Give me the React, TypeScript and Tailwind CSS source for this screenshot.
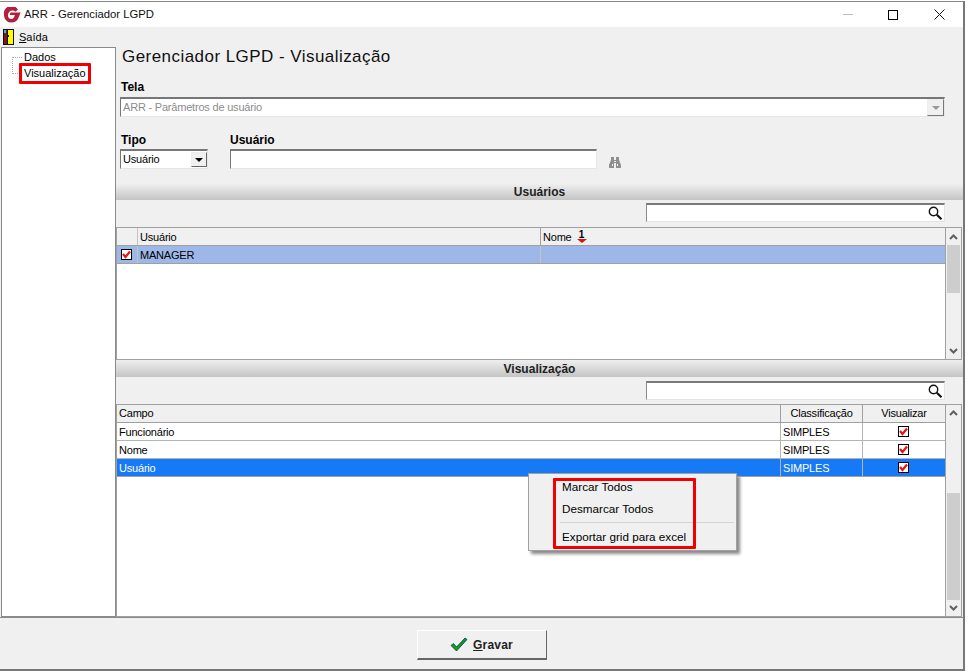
const font = { fontFamily: '"Liberation Sans", Arial, sans-serif' }

function RedCheck() {
  return (
    <span className="flex size-[11px] items-center justify-center border border-black bg-white">
      <svg width="9" height="9" viewBox="0 0 9 9">
        <path d="M1 4 L3.5 7 L8 1.5" fill="none" stroke="#ee1111" strokeWidth="2.2" />
      </svg>
    </span>
  )
}

function SearchIcon() {
  return (
    <svg width="16" height="16" viewBox="0 0 16 16" className="mr-px">
      <circle cx="6.5" cy="6.5" r="4.2" fill="none" stroke="#111" strokeWidth="1.4" />
      <path d="M9.8 9.8 L14.5 14.2" stroke="#111" strokeWidth="2.2" />
    </svg>
  )
}

function Binoculars() {
  return (
    <svg width="12" height="11" viewBox="0 0 12 11">
      <path d="M2 0h3v3h2V0h3v3l2 5v3H7V6H5v5H0V8l2-5z" fill="#8f8f8f" />
      <path d="M3 7h1v2H3zM8 7h1v2H8zM5 4h2v1H5z" fill="#f0f0f0" />
    </svg>
  )
}

function SectionBar({ title, height }: { title: string; height: string }) {
  return (
    <div className={`flex ${height} items-center justify-center bg-gradient-to-b from-[#efefef] to-[#c4c4c4] text-[12px] font-bold text-[#222]`}>
      {title}
    </div>
  )
}

function SearchBox({ top }: { top: string }) {
  return (
    <div className={`flex h-[27px] items-start justify-end ${top} pr-[18px]`}>
      <div className="flex h-[19px] w-[299px] items-center justify-end border-t-2 border-r border-b border-l border-t-[#7a7a7a] border-r-[#e4e4e4] border-b-[#e4e4e4] border-l-[#8a8a8a] bg-white">
        <SearchIcon />
      </div>
    </div>
  )
}

function Scrollbar({ thumbTop, thumbHeight }: { thumbTop: number; thumbHeight: number }) {
  return (
    <div className="flex w-[16px] flex-col border-l border-[#a0a0a0] bg-[#f0f0f0]">
      <div className="flex h-[17px] items-center justify-center">
        <svg width="9" height="6" viewBox="0 0 9 6">
          <path d="M1 5 L4.5 1.5 L8 5" fill="none" stroke="#606060" strokeWidth="2" />
        </svg>
      </div>
      <div className="flex-1 px-px">
        <div className="bg-[#cdcdcd]" style={{ marginTop: thumbTop, height: thumbHeight }} />
      </div>
      <div className="flex h-[17px] items-center justify-center">
        <svg width="9" height="6" viewBox="0 0 9 6">
          <path d="M1 1 L4.5 4.5 L8 1" fill="none" stroke="#606060" strokeWidth="2" />
        </svg>
      </div>
    </div>
  )
}

const fieldRows = ['Funcionário', 'Nome', 'Usuário']

export default function App() {
  return (
    <div className="relative h-[672px] w-[969px] overflow-hidden bg-white pt-px text-[11px] text-black" style={font}>
      {/* Window */}
      <div className="flex h-[670px] w-[965px] flex-col border-t border-r-2 border-b-2 border-t-[#888] border-r-[#777] border-b-[#777] bg-[#f0f0f0]">
        {/* Title bar */}
        <div className="flex h-[25px] items-center bg-white pl-[3px]">
          <svg width="18" height="16" viewBox="0 0 18 16">
            <path d="M15 2.6A7.6 7.6 0 0 0 1 8 7.4 7.4 0 0 0 8.6 15.6C12 15.6 14.6 13.6 15.6 10.4L17.6 5.6H7.6L6.6 8H11.8C11.2 10.6 10 12 8.4 12 6 12 4.8 10.2 5 8 5.2 5.6 7 3.6 9.4 3.6 10.6 3.6 11.6 4 12.4 4.8Z" fill="#b4203c" />
          </svg>
          <span className="ml-[3px] text-[11.3px] text-[#111]">ARR - Gerenciador LGPD</span>
          <div className="ml-auto flex items-center">
            <div className="mr-[35px] h-px w-[10px] bg-[#bbb]" />
            <div className="mr-[36px] size-[10px] border border-black" />
            <svg width="11" height="11" viewBox="0 0 11 11" className="mr-[18px]">
              <path d="M.5.5l10 10M10.5.5l-10 10" stroke="#111" strokeWidth="1" />
            </svg>
          </div>
        </div>

        {/* Menu */}
        <div className="flex h-[20px] items-center pl-[3px]">
          <svg width="11" height="16" viewBox="0 0 11 16">
            <rect width="11" height="16" fill="#111" />
            <rect x="1" y="1" width="3" height="14" fill="#7a1a10" />
            <rect x="1" y="1" width="2" height="3" fill="#30c0c8" />
            <rect x="5" y="1" width="5" height="14" fill="#ffff00" />
            <rect x="4" y="6" width="2" height="2" fill="#111" />
          </svg>
          <span className="ml-[5px]"><span className="underline">S</span>aída</span>
        </div>

        <div className="flex min-h-0 flex-1">
          {/* Tree */}
          <div className="relative ml-px w-[115px] border border-[#8a8a8a] bg-white">
            <div className="absolute top-[9px] left-[10px] h-[17px] w-[8px] border-b border-l border-dotted border-[#aaa]" />
            <div className="absolute top-[9px] left-[10px] w-[10px] border-t border-dotted border-[#aaa]" />
            <div className="pt-px pl-[22px] leading-[16px]">
              <div>Dados</div>
              <div>Visualização</div>
            </div>
          </div>

          {/* Content */}
          <div className="flex min-w-0 flex-1 flex-col">
            <div className="h-[137px] pl-[4px]">
              <h1 className="pl-[2px] text-[17px] leading-[20px] tracking-[0.45px] text-[#111]">Gerenciador LGPD - Visualização</h1>
              <div className="mt-[13px] pl-px text-[12px] leading-[14px] font-bold">Tela</div>
              <div className="mt-[3px] flex h-[20px] w-[825px] items-center justify-between border-t-2 border-r border-b border-l border-t-[#777] border-r-[#e6e6e6] border-b-[#e6e6e6] border-l-[#777] bg-white pl-[2px] tracking-[-0.2px] text-[#8c8c8c]">
                ARR - Parâmetros de usuário
                <span className="flex h-[17px] w-[17px] items-center justify-center border border-t-[#eee] border-r-[#777] border-b-[#777] border-l-[#eee] bg-[#f0f0f0]">
                  <span className="border-x-[4px] border-t-[4px] border-x-transparent border-t-[#999]" />
                </span>
              </div>
              <div className="mt-[16px] flex items-start text-[12px]">
                <div>
                  <div className="pl-px leading-[14px] font-bold">Tipo</div>
                  <div className="mt-[2px] flex h-[20px] w-[88px] items-center justify-between border-t-2 border-r border-b border-l border-t-[#777] border-r-[#e6e6e6] border-b-[#e6e6e6] border-l-[#777] bg-white pl-[2px] text-[11px] tracking-[-0.2px]">
                    Usuário
                    <span className="flex h-[15px] w-[16px] items-center justify-center border border-t-[#eee] border-r-[#666] border-b-[#666] border-l-[#eee] bg-[#f0f0f0]">
                      <span className="border-x-[4px] border-t-[4px] border-x-transparent border-t-black" />
                    </span>
                  </div>
                </div>
                <div className="ml-[22px]">
                  <div className="leading-[14px] font-bold">Usuário</div>
                  <div className="mt-[2px] h-[20px] w-[367px] border-t-2 border-r border-b border-l border-t-[#777] border-r-[#e6e6e6] border-b-[#e6e6e6] border-l-[#777] bg-white" />
                </div>
                <div className="mt-[24px] ml-[12px]"><Binoculars /></div>
              </div>
            </div>

            {/* Usuários */}
            <SectionBar title="Usuários" height="h-[16px]" />
            <SearchBox top="pt-[3px]" />
            <div className="flex h-[133px] w-[846px] border border-[#a0a0a0] bg-white tracking-[-0.2px]">
              <div className="min-w-0 flex-1">
                <div className="flex h-[18px] border-b border-[#a0a0a0] bg-[#f0f0f0] leading-[18px]">
                  <div className="w-[21px] border-r border-[#c4c4c4]" />
                  <div className="w-[403px] border-r border-[#a0a0a0] pl-[2px]">Usuário</div>
                  <div className="flex items-center pl-[2px]">
                    Nome
                    <span className="ml-[5px] flex w-[10px] flex-col items-center text-[10px] leading-[9px] font-bold">
                      1
                      <span className="border-x-[5px] border-t-[4px] border-x-transparent border-t-[#e01010]" />
                    </span>
                  </div>
                </div>
                <div className="flex h-[18px] border-b border-[#a0a0a0] bg-[#9db8e8] leading-[18px]">
                  <div className="flex w-[21px] items-center justify-center border-r border-[#c4c4c4] pr-px"><RedCheck /></div>
                  <div className="w-[403px] border-r border-[#c4c4c4] pl-[2px]">MANAGER</div>
                </div>
              </div>
              <Scrollbar thumbTop={0} thumbHeight={48} />
            </div>

            {/* Visualização */}
            <SectionBar title="Visualização" height="h-[17px]" />
            <SearchBox top="pt-[4px]" />
            <div className="flex h-[213px] w-[846px] border border-[#a0a0a0] bg-white tracking-[-0.2px]">
              <div className="min-w-0 flex-1">
                <div className="flex h-[18px] border-b border-[#a0a0a0] bg-[#f0f0f0] leading-[17px]">
                  <div className="w-[664px] border-r border-[#a0a0a0] pl-[2px]">Campo</div>
                  <div className="w-[82px] border-r border-[#a0a0a0] text-center">Classificação</div>
                  <div className="flex-1 text-center">Visualizar</div>
                </div>
                {fieldRows.map((name, i) => {
                  const selected = i === fieldRows.length - 1
                  return (
                    <div
                      key={name}
                      className={selected ? 'flex h-[18px] border-b border-[#a0a0a0] bg-[#1679f5] leading-[18px] text-white' : 'flex h-[18px] border-b border-[#b4b4b4] leading-[18px]'}
                    >
                      <div className="w-[664px] border-r border-[#b4b4b4] pl-[2px]">{name}</div>
                      <div className="w-[82px] border-r border-[#b4b4b4] pl-[2px]">SIMPLES</div>
                      <div className="flex flex-1 items-center justify-center pr-px"><RedCheck /></div>
                    </div>
                  )
                })}
              </div>
              <Scrollbar thumbTop={71} thumbHeight={107} />
            </div>
          </div>
        </div>

        {/* Footer */}
        <div className="flex h-[52px] items-start justify-center border-t border-[#8a8a8a] pt-[12px]">
          <button className="flex h-[30px] w-[130px] items-center justify-center gap-[5px] border border-t-white border-r-[#666] border-b-2 border-b-[#666] border-l-white bg-[#f0f0f0] text-[12px] font-bold tracking-[0.2px] text-[#222]">
            <svg width="18" height="15" viewBox="0 0 18 15">
              <path d="M1 8.5 L3.5 6.5 L6.5 10 L15 1 L17 2.5 L6.5 14 Z" fill="#0aa30a" stroke="#123080" strokeWidth="0.8" />
            </svg>
            <span><span className="underline">G</span>ravar</span>
          </button>
        </div>
      </div>

      {/* Annotation over the tree */}
      <div className="absolute top-[63px] left-[19px] h-[21px] w-[72px] rounded-[1px] border-[3px] border-[#f00000]" />

      {/* Context menu */}
      <div className="absolute top-[473px] left-[528px] h-[78px] w-[209px] border border-[#a0a0a0] bg-[#f0f0f0] text-[11.7px] shadow-[3px_3px_3px_#8a8a8a]">
        <div className="absolute top-[5px] left-[33px] leading-[16px]">Marcar Todos</div>
        <div className="absolute top-[27px] left-[33px] leading-[16px]">Desmarcar Todos</div>
        <div className="absolute top-[48px] right-[2px] left-[31px] h-px bg-[#d4d4d4]" />
        <div className="absolute top-[55px] left-[33px] leading-[16px]">Exportar grid para excel</div>
        <div className="absolute top-[4px] left-[24px] h-[71px] w-[143px] rounded-[1px] border-[3px] border-[#f00000]" />
      </div>
    </div>
  )
}
